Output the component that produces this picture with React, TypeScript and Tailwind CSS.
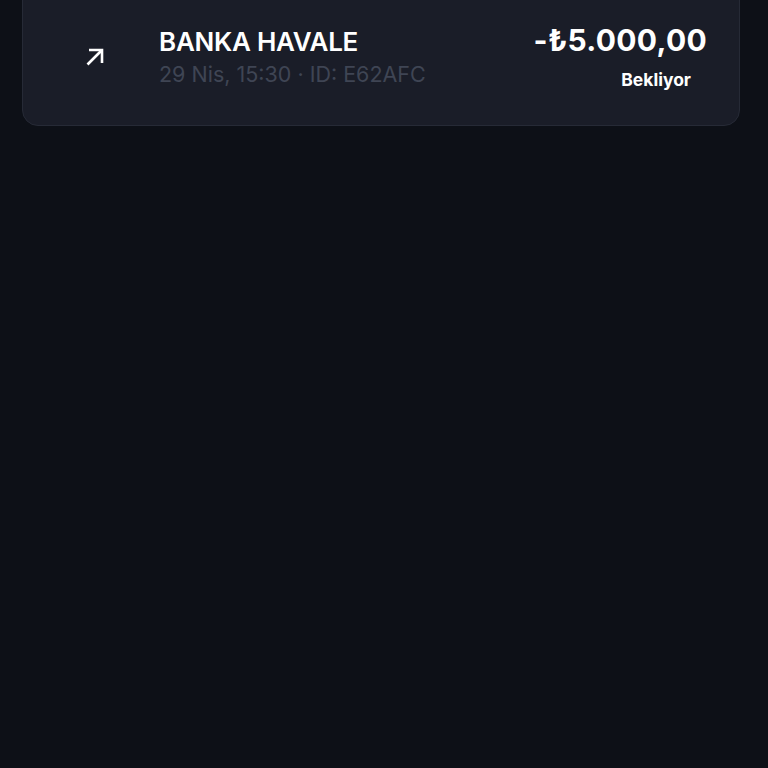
const tx = {
  title: "BANKA HAVALE",
  date: "29 Nis, 15:30",
  id: "E62AFC",
  amount: "-₺5.000,00",
  status: "Bekliyor",
};

function NorthEast() {
  return (
    <svg viewBox="0 0 18 18" className="h-[18px] w-[18px]" fill="none" stroke="currentColor" strokeWidth={2.6} strokeLinejoin="miter">
      <path d="M1.5 16.5 L16 2" />
      <path d="M3 2 H16 V15" />
    </svg>
  );
}

export default function App() {
  return (
    <div
      className="min-h-[768px] w-full overflow-hidden bg-[#0d1017] pl-[22px] pr-[28px]"
      style={{ fontFamily: "Inter, 'Noto Sans', sans-serif" }}
    >
      <div className="-mt-[16px] flex h-[142px] items-start rounded-[16px] border border-[#262a36] bg-[#1a1d28] pl-12 pr-8 pt-[37px] text-white">
        {/* Icon */}
        <div className="mt-[11px] flex h-12 w-12 items-center justify-center">
          <NorthEast />
        </div>

        {/* Title */}
        <div className="ml-10 mt-[4px] flex flex-1 flex-col">
          <span className="text-[26px] font-semibold leading-8 tracking-[-0.01em]">{tx.title}</span>
          <span className="mt-0.5 text-[21.5px] leading-7 text-[#3f4554]">
            {tx.date} · ID: {tx.id}
          </span>
        </div>

        {/* Amount */}
        <div className="flex flex-col items-end">
          <span className="text-[30px] font-bold leading-9 tracking-[0.01em]">{tx.amount}</span>
          <span className="mt-2.5 px-4 text-[17.5px] font-bold leading-6">{tx.status}</span>
        </div>
      </div>
    </div>
  );
}
